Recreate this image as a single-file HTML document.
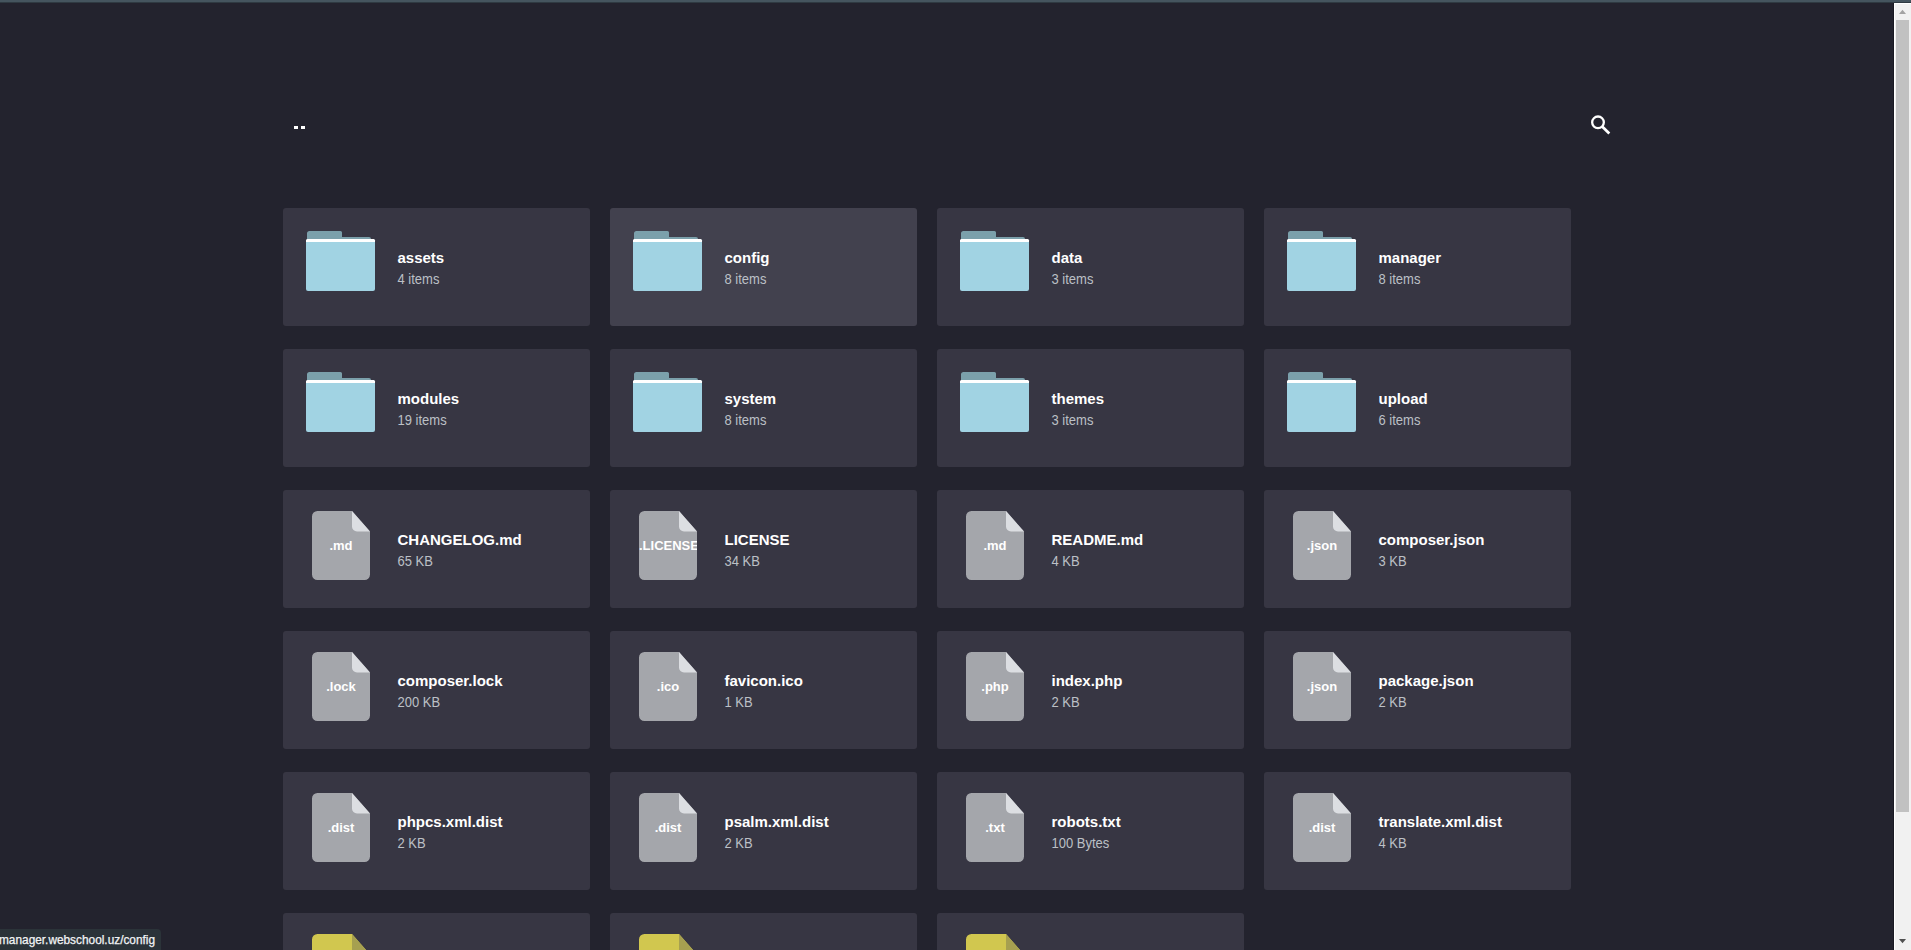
<!DOCTYPE html>
<html><head><meta charset="utf-8"><title>Files</title><style>
*{margin:0;padding:0;box-sizing:border-box}
html,body{width:1911px;height:950px;overflow:hidden;background:#23232e;font-family:"Liberation Sans",sans-serif}
#topbar{position:absolute;left:0;top:0;width:1911px;height:3px;background:#45555f}
#topbar:after{content:"";position:absolute;left:0;top:2px;width:1911px;height:1px;background:#2f3a42}
.dots{position:absolute;left:293.5px;top:126px;width:4px;height:3px;background:#fff}
.dots.d2{left:300.5px}
.search{position:absolute;left:1589px;top:113px}
.card{position:absolute;width:307px;height:118px;background:#373643;border-radius:3px}
.card.hov{background:#42414e}
.name{position:absolute;left:114.5px;top:41px;font-size:15px;font-weight:bold;color:#fff;white-space:nowrap;line-height:18px}
.info{position:absolute;left:114.5px;top:64px;font-size:13px;color:#bcc0c6;white-space:nowrap;line-height:16px;transform:scaleY(1.07);transform-origin:0 12.5px}
.fold{position:absolute;left:23px;top:23px}
.file{position:absolute;left:29px;top:21px;width:58px;height:69px}
.ext{position:absolute;left:0;top:27px;width:58px;text-align:center;font-size:13px;font-weight:bold;color:#fff;white-space:nowrap;overflow:hidden;line-height:16px}
#sb{position:absolute;left:1894px;top:3px;width:17px;height:947px;background:#f1f1f1;border-left:1px solid #fff;border-top:1px solid #fff}
#sbdark{position:absolute;left:1893px;top:3px;width:1px;height:947px;background:#191922}
#thumb{position:absolute;left:1896px;top:20px;width:13px;height:792px;background:#c1c1c1}
.arr{position:absolute;width:0;height:0;border-left:3.5px solid transparent;border-right:3.5px solid transparent}
#up{left:1898.5px;top:10px;border-left-width:4px;border-right-width:4px;border-bottom:4px solid #a3a3a3}
#down{left:1898.5px;top:939px;border-left-width:4px;border-right-width:4px;border-top:4px solid #505050}
#status{position:absolute;left:0;top:929px;width:161px;height:21px;background:#2b3339;border-top-right-radius:4px;overflow:hidden}
#status span{position:absolute;left:-1px;top:4px;font-size:11.85px;color:#f2f3f5;-webkit-text-stroke:0.25px #f2f3f5;white-space:nowrap;line-height:14px}
</style></head>
<body>
<div id="topbar"></div>
<div class="dots"></div><div class="dots d2"></div>
<div class="search"><svg width="24" height="24" viewBox="0 0 24 24"><circle cx="9" cy="9.35" r="5.85" fill="none" stroke="#fff" stroke-width="2.3"/><path d="M12.9 13.3L20.3 20.4" stroke="#fff" stroke-width="2.8" stroke-linecap="butt"/></svg></div>
<div class="card" style="left:283px;top:208px"><svg class="fold" width="70" height="62" viewBox="0 0 70 62"><path d="M1 2.5Q1 0 3.5 0H34.5Q36 0 36 1.5V6H63Q65 6 65 8V10H1Z" fill="#7ba0ab"/><path d="M0 10.5Q0 8 2.5 8H66.5Q69 8 69 10.5V58Q69 60 67 60H2Q0 60 0 58Z" fill="#a1d3e3"/><path d="M0 10.5Q0 8 2.5 8H66.5Q69 8 69 10.5V11H0Z" fill="#fff"/><rect x="0" y="8" width="69" height="3" rx="2" fill="#fff"/></svg><div class="name">assets</div><div class="info">4 items</div></div>
<div class="card hov" style="left:610px;top:208px"><svg class="fold" width="70" height="62" viewBox="0 0 70 62"><path d="M1 2.5Q1 0 3.5 0H34.5Q36 0 36 1.5V6H63Q65 6 65 8V10H1Z" fill="#7ba0ab"/><path d="M0 10.5Q0 8 2.5 8H66.5Q69 8 69 10.5V58Q69 60 67 60H2Q0 60 0 58Z" fill="#a1d3e3"/><path d="M0 10.5Q0 8 2.5 8H66.5Q69 8 69 10.5V11H0Z" fill="#fff"/><rect x="0" y="8" width="69" height="3" rx="2" fill="#fff"/></svg><div class="name">config</div><div class="info">8 items</div></div>
<div class="card" style="left:937px;top:208px"><svg class="fold" width="70" height="62" viewBox="0 0 70 62"><path d="M1 2.5Q1 0 3.5 0H34.5Q36 0 36 1.5V6H63Q65 6 65 8V10H1Z" fill="#7ba0ab"/><path d="M0 10.5Q0 8 2.5 8H66.5Q69 8 69 10.5V58Q69 60 67 60H2Q0 60 0 58Z" fill="#a1d3e3"/><path d="M0 10.5Q0 8 2.5 8H66.5Q69 8 69 10.5V11H0Z" fill="#fff"/><rect x="0" y="8" width="69" height="3" rx="2" fill="#fff"/></svg><div class="name">data</div><div class="info">3 items</div></div>
<div class="card" style="left:1264px;top:208px"><svg class="fold" width="70" height="62" viewBox="0 0 70 62"><path d="M1 2.5Q1 0 3.5 0H34.5Q36 0 36 1.5V6H63Q65 6 65 8V10H1Z" fill="#7ba0ab"/><path d="M0 10.5Q0 8 2.5 8H66.5Q69 8 69 10.5V58Q69 60 67 60H2Q0 60 0 58Z" fill="#a1d3e3"/><path d="M0 10.5Q0 8 2.5 8H66.5Q69 8 69 10.5V11H0Z" fill="#fff"/><rect x="0" y="8" width="69" height="3" rx="2" fill="#fff"/></svg><div class="name">manager</div><div class="info">8 items</div></div>
<div class="card" style="left:283px;top:349px"><svg class="fold" width="70" height="62" viewBox="0 0 70 62"><path d="M1 2.5Q1 0 3.5 0H34.5Q36 0 36 1.5V6H63Q65 6 65 8V10H1Z" fill="#7ba0ab"/><path d="M0 10.5Q0 8 2.5 8H66.5Q69 8 69 10.5V58Q69 60 67 60H2Q0 60 0 58Z" fill="#a1d3e3"/><path d="M0 10.5Q0 8 2.5 8H66.5Q69 8 69 10.5V11H0Z" fill="#fff"/><rect x="0" y="8" width="69" height="3" rx="2" fill="#fff"/></svg><div class="name">modules</div><div class="info">19 items</div></div>
<div class="card" style="left:610px;top:349px"><svg class="fold" width="70" height="62" viewBox="0 0 70 62"><path d="M1 2.5Q1 0 3.5 0H34.5Q36 0 36 1.5V6H63Q65 6 65 8V10H1Z" fill="#7ba0ab"/><path d="M0 10.5Q0 8 2.5 8H66.5Q69 8 69 10.5V58Q69 60 67 60H2Q0 60 0 58Z" fill="#a1d3e3"/><path d="M0 10.5Q0 8 2.5 8H66.5Q69 8 69 10.5V11H0Z" fill="#fff"/><rect x="0" y="8" width="69" height="3" rx="2" fill="#fff"/></svg><div class="name">system</div><div class="info">8 items</div></div>
<div class="card" style="left:937px;top:349px"><svg class="fold" width="70" height="62" viewBox="0 0 70 62"><path d="M1 2.5Q1 0 3.5 0H34.5Q36 0 36 1.5V6H63Q65 6 65 8V10H1Z" fill="#7ba0ab"/><path d="M0 10.5Q0 8 2.5 8H66.5Q69 8 69 10.5V58Q69 60 67 60H2Q0 60 0 58Z" fill="#a1d3e3"/><path d="M0 10.5Q0 8 2.5 8H66.5Q69 8 69 10.5V11H0Z" fill="#fff"/><rect x="0" y="8" width="69" height="3" rx="2" fill="#fff"/></svg><div class="name">themes</div><div class="info">3 items</div></div>
<div class="card" style="left:1264px;top:349px"><svg class="fold" width="70" height="62" viewBox="0 0 70 62"><path d="M1 2.5Q1 0 3.5 0H34.5Q36 0 36 1.5V6H63Q65 6 65 8V10H1Z" fill="#7ba0ab"/><path d="M0 10.5Q0 8 2.5 8H66.5Q69 8 69 10.5V58Q69 60 67 60H2Q0 60 0 58Z" fill="#a1d3e3"/><path d="M0 10.5Q0 8 2.5 8H66.5Q69 8 69 10.5V11H0Z" fill="#fff"/><rect x="0" y="8" width="69" height="3" rx="2" fill="#fff"/></svg><div class="name">upload</div><div class="info">6 items</div></div>
<div class="card" style="left:283px;top:490px"><div class="file"><svg width="58" height="69" viewBox="0 0 58 69" style="position:absolute;left:0;top:0"><path d="M5.5 0H40L58 20.5V63.5A5.5 5.5 0 0 1 52.5 69H5.5A5.5 5.5 0 0 1 0 63.5V5.5A5.5 5.5 0 0 1 5.5 0Z" fill="#a4a6ab"/><path d="M40 0L58 20.5H45A5 5 0 0 1 40 15.5Z" fill="#dcdee2"/></svg><div class="ext">.md</div></div><div class="name">CHANGELOG.md</div><div class="info">65 KB</div></div>
<div class="card" style="left:610px;top:490px"><div class="file"><svg width="58" height="69" viewBox="0 0 58 69" style="position:absolute;left:0;top:0"><path d="M5.5 0H40L58 20.5V63.5A5.5 5.5 0 0 1 52.5 69H5.5A5.5 5.5 0 0 1 0 63.5V5.5A5.5 5.5 0 0 1 5.5 0Z" fill="#a4a6ab"/><path d="M40 0L58 20.5H45A5 5 0 0 1 40 15.5Z" fill="#dcdee2"/></svg><div class="ext">.LICENSE</div></div><div class="name">LICENSE</div><div class="info">34 KB</div></div>
<div class="card" style="left:937px;top:490px"><div class="file"><svg width="58" height="69" viewBox="0 0 58 69" style="position:absolute;left:0;top:0"><path d="M5.5 0H40L58 20.5V63.5A5.5 5.5 0 0 1 52.5 69H5.5A5.5 5.5 0 0 1 0 63.5V5.5A5.5 5.5 0 0 1 5.5 0Z" fill="#a4a6ab"/><path d="M40 0L58 20.5H45A5 5 0 0 1 40 15.5Z" fill="#dcdee2"/></svg><div class="ext">.md</div></div><div class="name">README.md</div><div class="info">4 KB</div></div>
<div class="card" style="left:1264px;top:490px"><div class="file"><svg width="58" height="69" viewBox="0 0 58 69" style="position:absolute;left:0;top:0"><path d="M5.5 0H40L58 20.5V63.5A5.5 5.5 0 0 1 52.5 69H5.5A5.5 5.5 0 0 1 0 63.5V5.5A5.5 5.5 0 0 1 5.5 0Z" fill="#a4a6ab"/><path d="M40 0L58 20.5H45A5 5 0 0 1 40 15.5Z" fill="#dcdee2"/></svg><div class="ext">.json</div></div><div class="name">composer.json</div><div class="info">3 KB</div></div>
<div class="card" style="left:283px;top:631px"><div class="file"><svg width="58" height="69" viewBox="0 0 58 69" style="position:absolute;left:0;top:0"><path d="M5.5 0H40L58 20.5V63.5A5.5 5.5 0 0 1 52.5 69H5.5A5.5 5.5 0 0 1 0 63.5V5.5A5.5 5.5 0 0 1 5.5 0Z" fill="#a4a6ab"/><path d="M40 0L58 20.5H45A5 5 0 0 1 40 15.5Z" fill="#dcdee2"/></svg><div class="ext">.lock</div></div><div class="name">composer.lock</div><div class="info">200 KB</div></div>
<div class="card" style="left:610px;top:631px"><div class="file"><svg width="58" height="69" viewBox="0 0 58 69" style="position:absolute;left:0;top:0"><path d="M5.5 0H40L58 20.5V63.5A5.5 5.5 0 0 1 52.5 69H5.5A5.5 5.5 0 0 1 0 63.5V5.5A5.5 5.5 0 0 1 5.5 0Z" fill="#a4a6ab"/><path d="M40 0L58 20.5H45A5 5 0 0 1 40 15.5Z" fill="#dcdee2"/></svg><div class="ext">.ico</div></div><div class="name">favicon.ico</div><div class="info">1 KB</div></div>
<div class="card" style="left:937px;top:631px"><div class="file"><svg width="58" height="69" viewBox="0 0 58 69" style="position:absolute;left:0;top:0"><path d="M5.5 0H40L58 20.5V63.5A5.5 5.5 0 0 1 52.5 69H5.5A5.5 5.5 0 0 1 0 63.5V5.5A5.5 5.5 0 0 1 5.5 0Z" fill="#a4a6ab"/><path d="M40 0L58 20.5H45A5 5 0 0 1 40 15.5Z" fill="#dcdee2"/></svg><div class="ext">.php</div></div><div class="name">index.php</div><div class="info">2 KB</div></div>
<div class="card" style="left:1264px;top:631px"><div class="file"><svg width="58" height="69" viewBox="0 0 58 69" style="position:absolute;left:0;top:0"><path d="M5.5 0H40L58 20.5V63.5A5.5 5.5 0 0 1 52.5 69H5.5A5.5 5.5 0 0 1 0 63.5V5.5A5.5 5.5 0 0 1 5.5 0Z" fill="#a4a6ab"/><path d="M40 0L58 20.5H45A5 5 0 0 1 40 15.5Z" fill="#dcdee2"/></svg><div class="ext">.json</div></div><div class="name">package.json</div><div class="info">2 KB</div></div>
<div class="card" style="left:283px;top:772px"><div class="file"><svg width="58" height="69" viewBox="0 0 58 69" style="position:absolute;left:0;top:0"><path d="M5.5 0H40L58 20.5V63.5A5.5 5.5 0 0 1 52.5 69H5.5A5.5 5.5 0 0 1 0 63.5V5.5A5.5 5.5 0 0 1 5.5 0Z" fill="#a4a6ab"/><path d="M40 0L58 20.5H45A5 5 0 0 1 40 15.5Z" fill="#dcdee2"/></svg><div class="ext">.dist</div></div><div class="name">phpcs.xml.dist</div><div class="info">2 KB</div></div>
<div class="card" style="left:610px;top:772px"><div class="file"><svg width="58" height="69" viewBox="0 0 58 69" style="position:absolute;left:0;top:0"><path d="M5.5 0H40L58 20.5V63.5A5.5 5.5 0 0 1 52.5 69H5.5A5.5 5.5 0 0 1 0 63.5V5.5A5.5 5.5 0 0 1 5.5 0Z" fill="#a4a6ab"/><path d="M40 0L58 20.5H45A5 5 0 0 1 40 15.5Z" fill="#dcdee2"/></svg><div class="ext">.dist</div></div><div class="name">psalm.xml.dist</div><div class="info">2 KB</div></div>
<div class="card" style="left:937px;top:772px"><div class="file"><svg width="58" height="69" viewBox="0 0 58 69" style="position:absolute;left:0;top:0"><path d="M5.5 0H40L58 20.5V63.5A5.5 5.5 0 0 1 52.5 69H5.5A5.5 5.5 0 0 1 0 63.5V5.5A5.5 5.5 0 0 1 5.5 0Z" fill="#a4a6ab"/><path d="M40 0L58 20.5H45A5 5 0 0 1 40 15.5Z" fill="#dcdee2"/></svg><div class="ext">.txt</div></div><div class="name">robots.txt</div><div class="info">100 Bytes</div></div>
<div class="card" style="left:1264px;top:772px"><div class="file"><svg width="58" height="69" viewBox="0 0 58 69" style="position:absolute;left:0;top:0"><path d="M5.5 0H40L58 20.5V63.5A5.5 5.5 0 0 1 52.5 69H5.5A5.5 5.5 0 0 1 0 63.5V5.5A5.5 5.5 0 0 1 5.5 0Z" fill="#a4a6ab"/><path d="M40 0L58 20.5H45A5 5 0 0 1 40 15.5Z" fill="#dcdee2"/></svg><div class="ext">.dist</div></div><div class="name">translate.xml.dist</div><div class="info">4 KB</div></div>
<div class="card" style="left:283px;top:913px"><div class="file"><svg width="58" height="69" viewBox="0 0 58 69" style="position:absolute;left:0;top:0"><path d="M5.5 0H40L58 20.5V63.5A5.5 5.5 0 0 1 52.5 69H5.5A5.5 5.5 0 0 1 0 63.5V5.5A5.5 5.5 0 0 1 5.5 0Z" fill="#d1c74f"/><path d="M40 0L58 20.5H45A5 5 0 0 1 40 15.5Z" fill="#a6a050"/></svg></div></div>
<div class="card" style="left:610px;top:913px"><div class="file"><svg width="58" height="69" viewBox="0 0 58 69" style="position:absolute;left:0;top:0"><path d="M5.5 0H40L58 20.5V63.5A5.5 5.5 0 0 1 52.5 69H5.5A5.5 5.5 0 0 1 0 63.5V5.5A5.5 5.5 0 0 1 5.5 0Z" fill="#d1c74f"/><path d="M40 0L58 20.5H45A5 5 0 0 1 40 15.5Z" fill="#a6a050"/></svg></div></div>
<div class="card" style="left:937px;top:913px"><div class="file"><svg width="58" height="69" viewBox="0 0 58 69" style="position:absolute;left:0;top:0"><path d="M5.5 0H40L58 20.5V63.5A5.5 5.5 0 0 1 52.5 69H5.5A5.5 5.5 0 0 1 0 63.5V5.5A5.5 5.5 0 0 1 5.5 0Z" fill="#d1c74f"/><path d="M40 0L58 20.5H45A5 5 0 0 1 40 15.5Z" fill="#a6a050"/></svg></div></div>
<div id="sbdark"></div><div id="sb"></div><div id="thumb"></div><svg style="position:absolute;left:1894px;top:0" width="17" height="950"><path d="M5 14H12L8.5 9.8Z" fill="#a3a3a3"/><path d="M5 939H12L8.5 943.2Z" fill="#505050"/></svg>
<div id="status"><span>manager.webschool.uz/config</span></div>
</body></html>
